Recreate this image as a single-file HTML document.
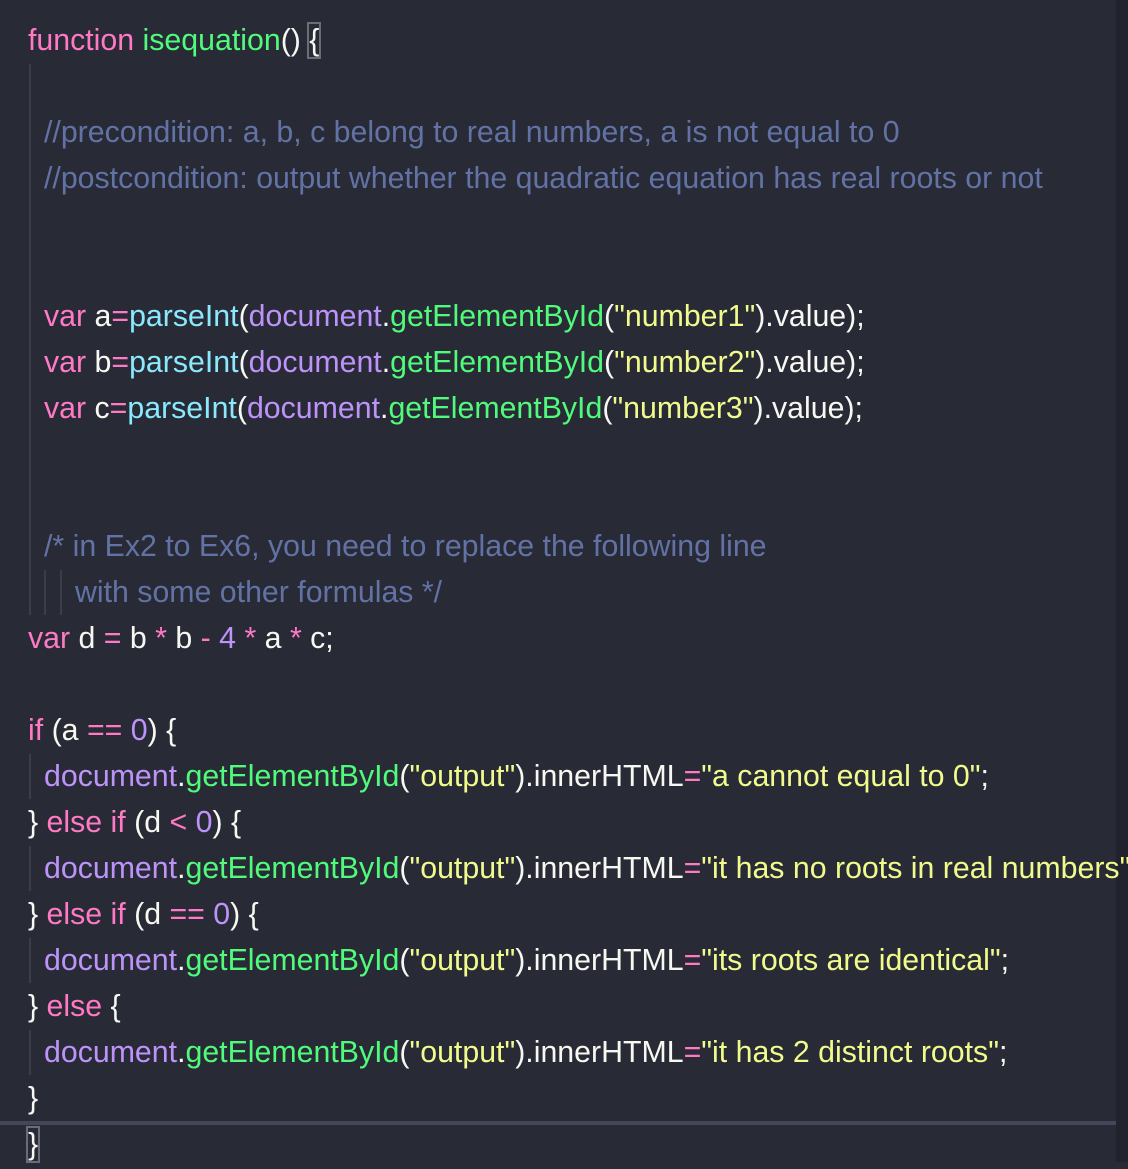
<!DOCTYPE html>
<html><head><meta charset="utf-8"><style>
html,body{margin:0;padding:0;}
body{width:1128px;height:1162px;background:#282a36;position:relative;overflow:hidden;font-family:"Liberation Sans",sans-serif;font-size:30.3px;color:#f8f8f2;}
.l{position:absolute;height:46px;line-height:48px;white-space:pre;}
.k{color:#ff79c6}.f{color:#50fa7b}.c{color:#6272a4;font-size:30.3px}.b{color:#8be9fd}.p{color:#bd93f9}.y{color:#f1fa8c}
.g{position:absolute;width:2px;background:#3b3d4a;}
.bx{outline:2px solid #6a6c78;outline-offset:0px;}
</style></head><body>
<div style="position:absolute;left:1116px;top:0;width:12px;height:1162px;background:#21222c"></div>
<div style="position:absolute;left:0;top:1121px;width:1116px;height:4px;background:#44475a"></div>
<div class="g" style="left:29px;top:64px;height:551px"></div>
<div class="g" style="left:44px;top:570px;height:45px"></div>
<div class="g" style="left:60px;top:570px;height:45px"></div>
<div class="g" style="left:29px;top:754px;height:45px"></div>
<div class="g" style="left:29px;top:846px;height:45px"></div>
<div class="g" style="left:29px;top:938px;height:45px"></div>
<div class="g" style="left:29px;top:1030px;height:45px"></div>

<div class="l" style="left:28px;top:17px"><span class="k">function</span> <span class="f">isequation</span>() <span class="bx">{</span></div>
<div class="l c" style="left:44px;top:109px">//precondition: a, b, c belong to real numbers, a is not equal to 0</div>
<div class="l c" style="left:44px;top:155px">//postcondition: output whether the quadratic equation has real roots or not</div>
<div class="l" style="left:44px;top:293px"><span class="k">var</span> a<span class="k">=</span><span class="b">parseInt</span>(<span class="p">document</span>.<span class="f">getElementById</span>(<span class="y">"number1"</span>).value);</div>
<div class="l" style="left:44px;top:339px"><span class="k">var</span> b<span class="k">=</span><span class="b">parseInt</span>(<span class="p">document</span>.<span class="f">getElementById</span>(<span class="y">"number2"</span>).value);</div>
<div class="l" style="left:44px;top:385px"><span class="k">var</span> c<span class="k">=</span><span class="b">parseInt</span>(<span class="p">document</span>.<span class="f">getElementById</span>(<span class="y">"number3"</span>).value);</div>
<div class="l c" style="left:44px;top:523px">/* in Ex2 to Ex6, you need to replace the following line</div>
<div class="l c" style="left:75px;top:569px">with some other formulas */</div>
<div class="l" style="left:28px;top:615px"><span class="k">var</span> d <span class="k">=</span> b <span class="k">*</span> b <span class="k">-</span> <span class="p">4</span> <span class="k">*</span> a <span class="k">*</span> c;</div>
<div class="l" style="left:28px;top:707px"><span class="k">if</span> (a <span class="k">==</span> <span class="p">0</span>) {</div>
<div class="l" style="left:44px;top:753px"><span class="p">document</span>.<span class="f">getElementById</span>(<span class="y">"output"</span>).innerHTML<span class="k">=</span><span class="y">"a cannot equal to 0"</span>;</div>
<div class="l" style="left:28px;top:799px">} <span class="k">else if</span> (d <span class="k">&lt;</span> <span class="p">0</span>) {</div>
<div class="l" style="left:44px;top:845px"><span class="p">document</span>.<span class="f">getElementById</span>(<span class="y">"output"</span>).innerHTML<span class="k">=</span><span class="y">"it has no roots in real numbers"</span>;</div>
<div class="l" style="left:28px;top:891px">} <span class="k">else if</span> (d <span class="k">==</span> <span class="p">0</span>) {</div>
<div class="l" style="left:44px;top:937px"><span class="p">document</span>.<span class="f">getElementById</span>(<span class="y">"output"</span>).innerHTML<span class="k">=</span><span class="y">"its roots are identical"</span>;</div>
<div class="l" style="left:28px;top:983px">} <span class="k">else</span> {</div>
<div class="l" style="left:44px;top:1029px"><span class="p">document</span>.<span class="f">getElementById</span>(<span class="y">"output"</span>).innerHTML<span class="k">=</span><span class="y">"it has 2 distinct roots"</span>;</div>
<div class="l" style="left:28px;top:1075px">}</div>
<div class="l" style="left:28px;top:1121px"><span class="bx">}</span></div>
</body></html>
